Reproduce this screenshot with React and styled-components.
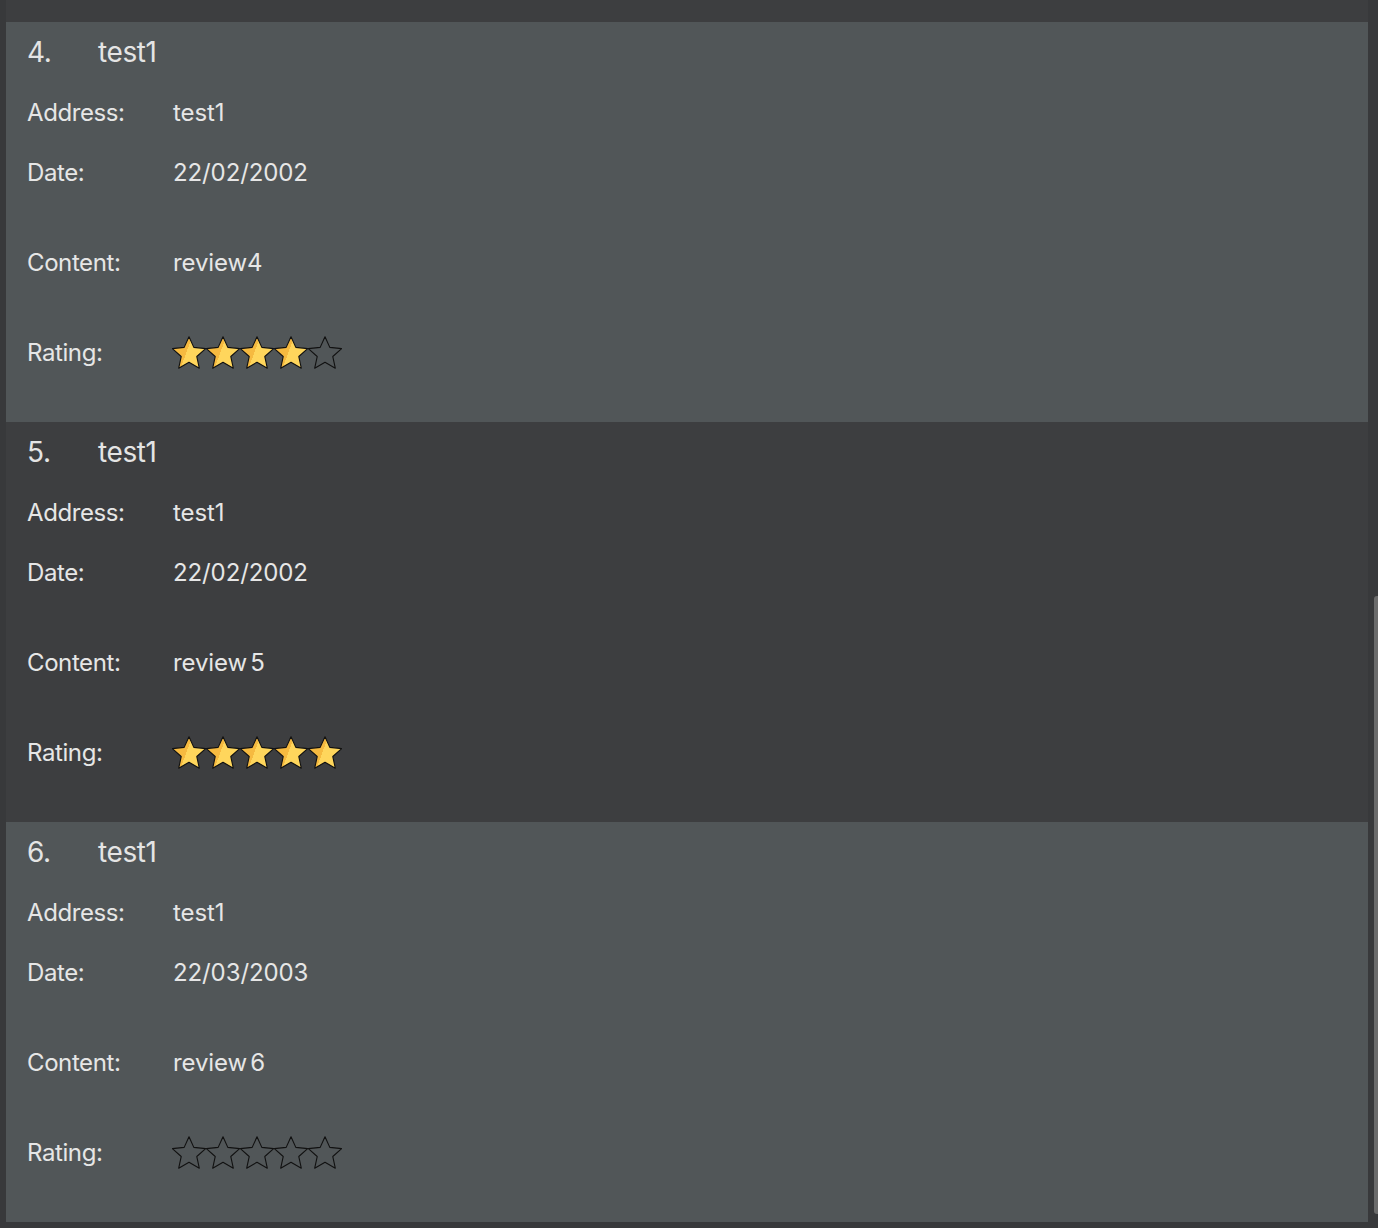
import React from "react";
import styled, { createGlobalStyle } from "styled-components";

const Global = createGlobalStyle`
  html, body { margin: 0; padding: 0; background: #38393b; }
  body { font-family: Inter, "Noto Sans", "Liberation Sans", sans-serif; }
`;

const Frame = styled.div`
  width: 1378px;
  height: 1228px;
  display: flex;
  overflow: hidden;
  background: #38393b;
`;

const Main = styled.div`
  width: 1362px;
  margin-left: 6px;
  display: flex;
  flex-direction: column;
`;

const PrevTail = styled.div`
  height: 22px;
  background: #3d3e40;
  flex-shrink: 0;
`;

const Card = styled.section`
  height: 400px;
  flex-shrink: 0;
  box-sizing: border-box;
  padding-left: 21px;
  background: ${(p) => (p.$alt ? "#3d3e40" : "#515658")};
  color: #e6e6e6;
  display: grid;
  grid-template-rows: 60px 60px 60px 120px 60px;
  align-content: start;
`;

const TitleRow = styled.div`
  display: flex;
  align-items: center;
  font-size: 28px;
  letter-spacing: -0.4px;
  color: #e4e4e4;
`;

const Num = styled.span`
  width: 71px;
`;

const Row = styled.div`
  display: flex;
  align-items: center;
  font-size: 24px;
`;

const Label = styled.span`
  width: 146px;
  flex-shrink: 0;
  letter-spacing: -0.4px;
`;

const Value = styled.span`
  letter-spacing: -0.1px;
  word-spacing: -3.5px;
`;

const Stars = styled.div`
  display: flex;
  margin-left: -1px;
  margin-top: 1px;
`;

const Track = styled.div`
  width: 10px;
  display: flex;
  flex-direction: column;
  align-items: flex-end;
  padding-top: 596px;
  box-sizing: border-box;
`;

const Thumb = styled.div`
  width: 4px;
  height: 618px;
  background: #6b6b6b;
  border-radius: 3px 0 0 3px;
`;

const STAR =
  "17,0.8 21.82,11.37 33.64,12.59 24.8,20.53 27.29,32.16 17,26.2 6.71,32.16 9.2,20.53 0.36,12.59 12.18,11.37";

function Star({ filled }) {
  return (
    <svg width="34" height="33" viewBox="0 0 34 33">
      <defs>
        <linearGradient id="starfill" x1="0" y1="0.1" x2="1" y2="0.45">
          <stop offset="0.5" stopColor="#f6ba40" />
          <stop offset="0.5" stopColor="#ffd65c" />
        </linearGradient>
      </defs>
      <polygon
        points={STAR}
        fill={filled ? "url(#starfill)" : "none"}
        stroke="#111"
        strokeWidth="1.1"
        strokeLinejoin="round"
      />
    </svg>
  );
}

const reviews = [
  { n: 4, name: "test1", address: "test1", date: "22/02/2002", content: "review4", rating: 4 },
  { n: 5, name: "test1", address: "test1", date: "22/02/2002", content: "review 5", rating: 5 },
  { n: 6, name: "test1", address: "test1", date: "22/03/2003", content: "review 6", rating: 0 },
];

export default function App() {
  return (
    <>
      <Global />
      <Frame>
        <Main>
          <PrevTail />
          {reviews.map((r, i) => (
            <Card key={r.n} $alt={i % 2 === 1}>
              <TitleRow>
                <Num>{r.n}.</Num>
                <span>{r.name}</span>
              </TitleRow>
              <Row>
                <Label>Address:</Label>
                <Value>{r.address}</Value>
              </Row>
              <Row>
                <Label>Date:</Label>
                <Value>{r.date}</Value>
              </Row>
              <Row>
                <Label>Content:</Label>
                <Value>{r.content}</Value>
              </Row>
              <Row>
                <Label>Rating:</Label>
                <Stars>
                  {[0, 1, 2, 3, 4].map((k) => (
                    <Star key={k} filled={k < r.rating} />
                  ))}
                </Stars>
              </Row>
            </Card>
          ))}
        </Main>
        <Track>
          <Thumb />
        </Track>
      </Frame>
    </>
  );
}
